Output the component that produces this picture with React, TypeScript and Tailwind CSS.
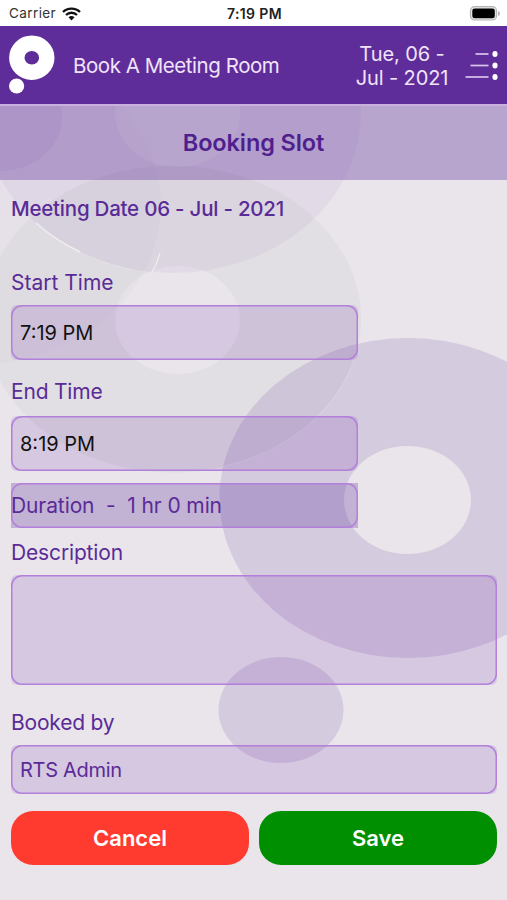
import type { ReactNode } from "react";

function Backdrop() {
  return (
    <svg className="absolute inset-0 -z-10" width="507" height="900" viewBox="0 0 507 900" aria-hidden="true">
      <rect width="507" height="900" fill="#e9e5eb" />
      <g fillRule="evenodd">
        <path
          fill="#d4d6d8"
          fillOpacity="0.4"
          d="M-16 319a188.500 153.500 0 1 0 377 0a188.500 153.500 0 1 0 -377 0ZM115 320a62.500 54 0 1 0 125 0a62.500 54 0 1 0 -125 0Z"
        />
        <path
          fill="#5f2d99"
          fillOpacity="0.05"
          d="M-16 113a188.500 160 0 1 0 377 0a188.500 160 0 1 0 -377 0ZM115 113a62.500 54 0 1 0 125 0a62.500 54 0 1 0 -125 0Z"
        />
        <path
          fill="#5b3597"
          fillOpacity="0.14"
          d="M219.500 498a188.500 160 0 1 0 377 0a188.500 160 0 1 0 -377 0ZM344 500a63.500 54 0 1 0 127 0a63.500 54 0 1 0 -127 0Z"
        />
      </g>
      <ellipse cx="281" cy="710" rx="62.500" ry="53" fill="#5b3597" fillOpacity="0.14" />
      <ellipse cx="0" cy="118" rx="62" ry="53" fill="#5f2d99" fillOpacity="0.05" />
      <ellipse cx="-27" cy="205" rx="188" ry="160" fill="#5f2d99" fillOpacity="0.02" />
      <path d="M36 223A188.500 160 0 0 0 80 252" fill="none" stroke="#f1edf2" strokeWidth="1.500" />
      <path d="M80 252A188.500 160 0 0 0 134 270" fill="none" stroke="#f1edf2" strokeOpacity="0.35" strokeWidth="1.200" />
      <path d="M160 253Q157 264 152 272" fill="none" stroke="#f1edf2" strokeWidth="1.200" />
      <path d="M358 345A188.500 153.500 0 0 1 221 467" fill="none" stroke="#e9e5eb" strokeOpacity="0.3" strokeWidth="1.500" />
    </svg>
  );
}

function StatusBar() {
  return (
    <div className="grid h-[26px] grid-cols-3 items-center bg-white pl-[9px] pr-[7px] pt-px text-[13.500px] text-[#333]">
      <div className="flex items-center gap-[6px]">
        <span className="w-[47px] tracking-[0.4px]">Carrier</span>
        <svg width="19" height="14" viewBox="0 0 19 14" fill="none" stroke="#111" strokeWidth="2.300">
          <path d="M1 5C5.500 0.500 13.500 0.500 18 5" />
          <path d="M4 8C7 5 12 5 15 8" />
          <path d="M6.500 10.200Q9.500 8 12.500 10.200L9.500 13.400Z" fill="#111" stroke="none" />
        </svg>
      </div>
      <span className="text-center text-[14px] font-semibold tracking-[0.350px] text-[#222]">7:19 PM</span>
      <svg className="justify-self-end" width="31" height="15" viewBox="0 0 31 15">
        <rect x="1.500" y="0.700" width="26" height="13.300" rx="4" fill="#e8e8e8" stroke="#b4b4b4" strokeWidth="1.200" />
        <rect x="3.300" y="2.500" width="22.500" height="9.700" rx="2.300" fill="#000" />
        <path d="M29 5Q31 5.500 31 7.500T29 10Z" fill="#b4b4b4" />
      </svg>
    </div>
  );
}

function Header() {
  return (
    <header className="flex h-[78px] items-center bg-[#5f2d99] text-[#f0e3fa]">
      <svg className="ml-[9px] shrink-0" width="46" height="60" viewBox="0 0 46 60">
        <ellipse cx="22.800" cy="22.800" rx="15" ry="14.500" fill="none" stroke="#fff" strokeWidth="15.400" />
        <circle cx="7.600" cy="51" r="7.600" fill="#fff" />
      </svg>
      <span className="ml-[18px] w-[260px] pt-[3px] text-[20.500px] tracking-[-0.450px]">Book A Meeting Room</span>
      <div className="ml-[18px] w-[102px] pt-[2px] text-center text-[20px] leading-[24px] tracking-[-0.1px]">
        Tue, 06 -<br />
        Jul - 2021
      </div>
      <svg className="ml-[12px]" width="34" height="30" viewBox="0 0 34 30">
        <g stroke="#d9c4ec" strokeWidth="1.700">
          <path d="M10.500 4H23.500" />
          <path d="M5.500 15.500H23.500" />
          <path d="M0.500 27H23.500" />
        </g>
        <g fill="#fff">
          <ellipse cx="30" cy="4" rx="2.600" ry="3" />
          <ellipse cx="30" cy="15.500" rx="2.600" ry="3" />
          <ellipse cx="30" cy="27" rx="2.600" ry="3" />
        </g>
      </svg>
    </header>
  );
}

function Outlined({ className, children }: { className: string; children?: ReactNode }) {
  return (
    <div className={className}>
      <div className="flex h-full w-full items-center rounded-[11px] pl-px shadow-[inset_0_0_0_1.500px_#b27fdb]">{children}</div>
    </div>
  );
}

function Label({ className, children }: { className: string; children: ReactNode }) {
  return <div className={"whitespace-nowrap leading-[26px] text-[#5a2b97] " + className}>{children}</div>;
}

export default function App() {
  return (
    <div className="relative isolate h-[900px] w-[507px] overflow-hidden font-['Inter','Liberation_Sans',sans-serif]">
      <Backdrop />
      <StatusBar />
      <Header />
      <div className="flex h-[76px] items-center justify-center border-t-2 border-[#c9b0df] bg-[#5f2d99]/35 text-[23.500px] font-semibold tracking-[-0.1px] text-[#4f1f8e]">
        Booking Slot
      </div>
      <main className="flex flex-col px-[11px] pr-[10px]">
        <Label className="mt-[16px] text-[20.500px] font-medium tracking-[-0.230px]">Meeting Date 06 - Jul - 2021</Label>
        <Label className="mt-[48px] text-[21px]">Start Time</Label>
        <Outlined className="mt-[9px] h-[55px] w-[347px] rounded-[6px] bg-[#6821a0]/15">
          <span className="pl-[8px] text-[20px] text-[#111]">7:19 PM</span>
        </Outlined>
        <Label className="mt-[19px] text-[21px] tracking-[-0.2px]">End Time</Label>
        <Outlined className="mt-[11px] h-[55px] w-[347px] rounded-[6px] bg-[#6821a0]/15">
          <span className="pl-[8px] text-[20px] text-[#111]">8:19 PM</span>
        </Outlined>
        <Outlined className="mt-[12px] h-[45px] w-[347px] bg-[#5f2d99]/28">
          <span className="-ml-px whitespace-pre text-[21px] tracking-[-0.1px] text-[#5a2b97]">{"Duration  -  1 hr 0 min"}</span>
        </Outlined>
        <Label className="mt-[12px] text-[21px] tracking-[-0.150px]">Description</Label>
        <Outlined className="mt-[9px] h-[110px] rounded-[6px] bg-[#6821a0]/15" />
        <Label className="mt-[25px] text-[21px] tracking-[-0.2px]">Booked by</Label>
        <Outlined className="mt-[9px] h-[49px] rounded-[6px] bg-[#6821a0]/15">
          <span className="pl-[8px] text-[20px] tracking-[-0.3px] text-[#5a2b97]">RTS Admin</span>
        </Outlined>
        <div className="mt-[17px] grid h-[54px] grid-cols-2 gap-[10px] text-[22px] font-semibold text-white">
          <button className="rounded-[22px] bg-[#ff3b30]">Cancel</button>
          <button className="rounded-[22px] bg-[#008f00]">Save</button>
        </div>
      </main>
    </div>
  );
}
